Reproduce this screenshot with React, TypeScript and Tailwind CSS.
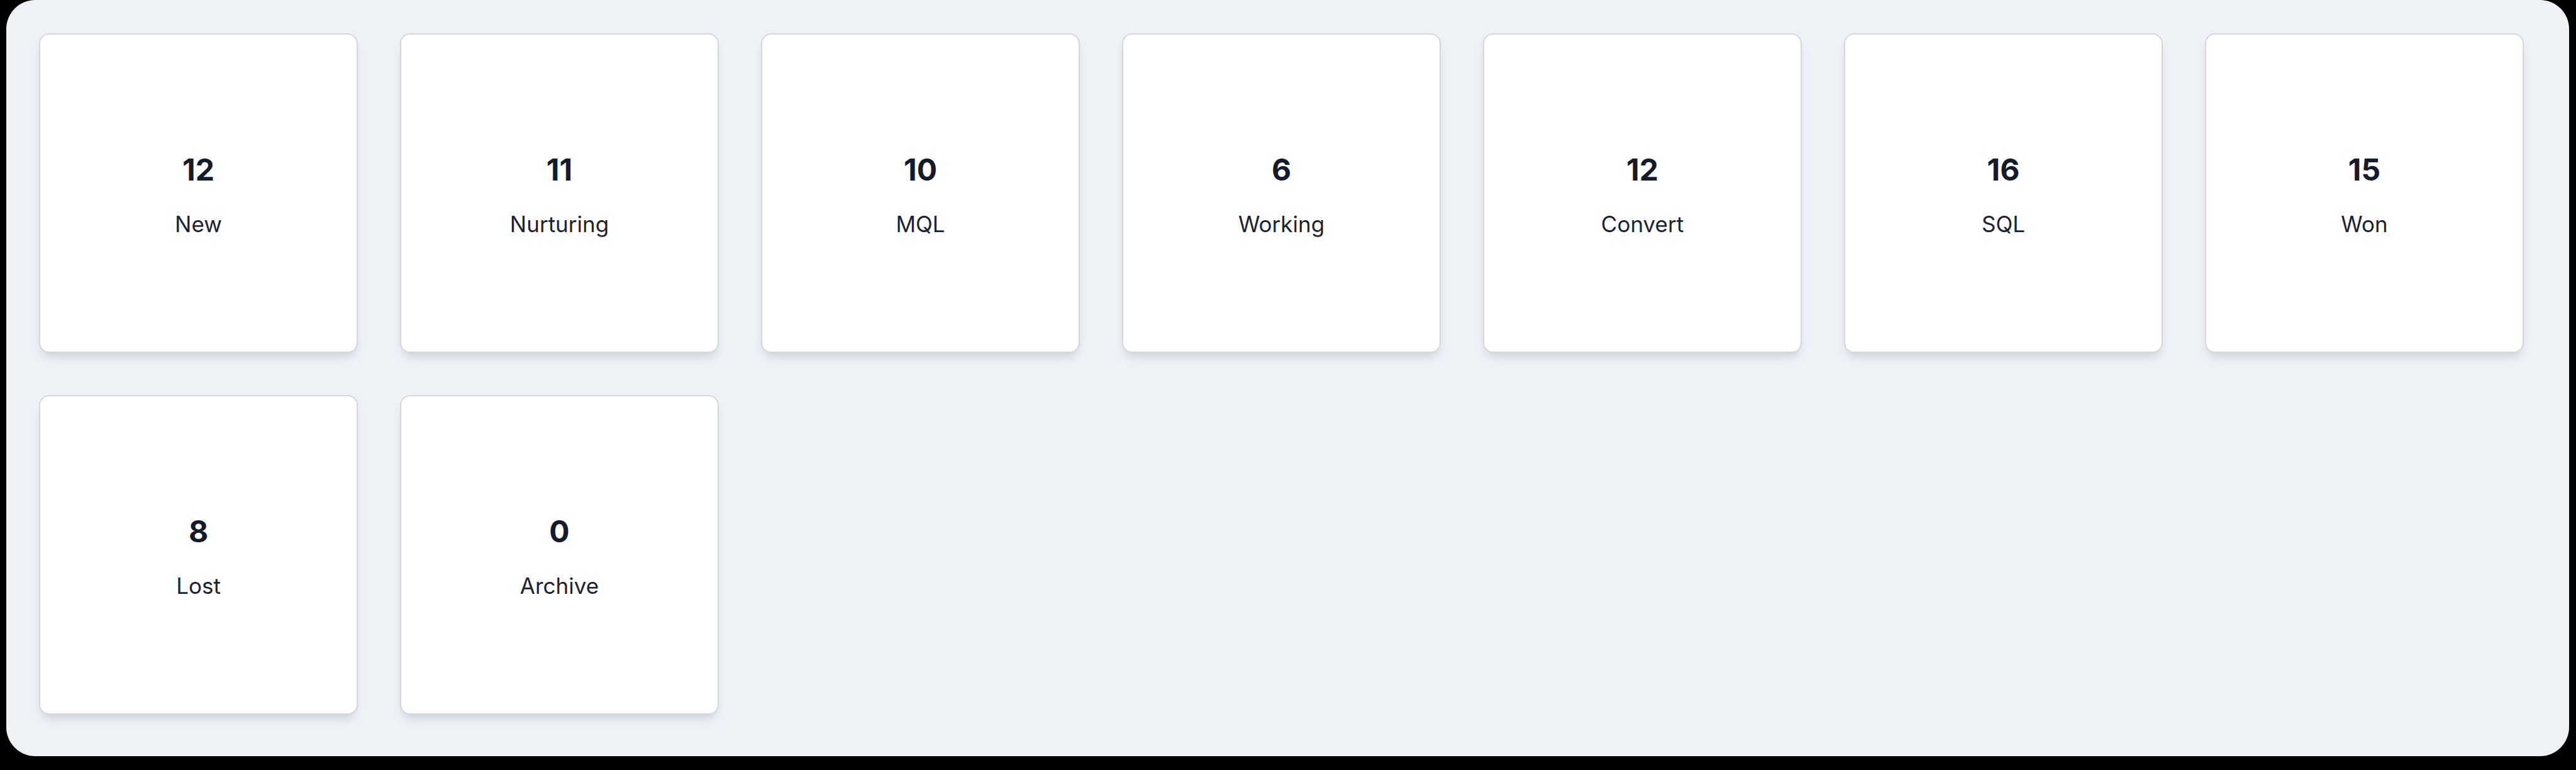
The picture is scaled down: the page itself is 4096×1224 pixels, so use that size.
const stages = [
  { count: 12, label: 'New' },
  { count: 11, label: 'Nurturing' },
  { count: 10, label: 'MQL' },
  { count: 6, label: 'Working' },
  { count: 12, label: 'Convert' },
  { count: 16, label: 'SQL' },
  { count: 15, label: 'Won' },
  { count: 8, label: 'Lost' },
  { count: 0, label: 'Archive' },
]

function StageCard({ count, label }: { count: number; label: string }) {
  return (
    <div className="flex h-[508px] w-[507px] flex-col items-center justify-center rounded-[16px] border-[2px] border-[#d3d8e0] bg-white pt-[5px] shadow-[0_10px_16px_-6px_rgba(15,23,42,0.18)]">
      <span className="text-[48px] font-bold leading-[60px] text-[#161b2c]">{count}</span>
      <span className="mt-[32px] text-[35px] font-normal leading-[48px] text-[#1c2230]">{label}</span>
    </div>
  )
}

export default function App() {
  return (
    <div className="h-[1224px] w-[4096px] bg-black font-['Inter','Liberation_Sans',sans-serif]">
      <div className="ml-[10px] h-[1202px] w-[4075px] rounded-[46px] bg-[#eef2f7] pl-[52px] pt-[53px]">
        <div className="grid grid-cols-[repeat(7,507px)] gap-[67px]">
          {stages.map((s) => (
            <StageCard key={s.label} count={s.count} label={s.label} />
          ))}
        </div>
      </div>
    </div>
  )
}
